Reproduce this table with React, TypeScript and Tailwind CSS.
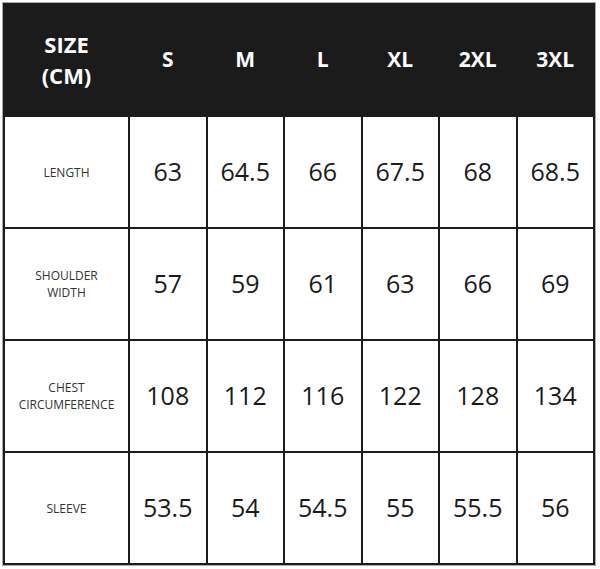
import React from "react";

const sizes = ["S", "M", "L", "XL", "2XL", "3XL"];
const rows: { label: string[]; values: string[] }[] = [
  { label: ["LENGTH"], values: ["63", "64.5", "66", "67.5", "68", "68.5"] },
  { label: ["SHOULDER", "WIDTH"], values: ["57", "59", "61", "63", "66", "69"] },
  { label: ["CHEST", "CIRCUMFERENCE"], values: ["108", "112", "116", "122", "128", "134"] },
  { label: ["SLEEVE"], values: ["53.5", "54", "54.5", "55", "55.5", "56"] },
];

export default function App() {
  return (
    <div className="w-[600px] h-[569px] bg-white pt-[2px] pl-[2px]" style={{ fontFamily: '"Open Sans", "Noto Sans", sans-serif' }}>
      <div className="w-[594px] border border-[#a8a8a8]">
        <div className="grid grid-cols-[123px_repeat(6,minmax(0,1fr))] grid-rows-[110px_repeat(4,110px)] gap-[2px] bg-[#1c1c1c] p-[2px]">
          <div className="bg-[#1b1b1b] flex flex-col items-center justify-center text-white font-bold text-[22px] leading-[31px]">
            <span>SIZE</span>
            <span>(CM)</span>
          </div>
          {sizes.map((s) => (
            <div key={s} className="bg-[#1b1b1b] flex items-center justify-center text-white font-bold text-[21px]">
              {s}
            </div>
          ))}
          {rows.map((r) => (
            <React.Fragment key={r.label.join(" ")}>
              <div className="bg-white flex flex-col items-center justify-center text-[#333] text-[12px] leading-[17px]">
                {r.label.map((l) => (
                  <span key={l}>{l}</span>
                ))}
              </div>
              {r.values.map((v, i) => (
                <div key={i} className="bg-white flex items-center justify-center text-[#1a1a1a] text-[25px]">
                  {v}
                </div>
              ))}
            </React.Fragment>
          ))}
        </div>
      </div>
    </div>
  );
}
